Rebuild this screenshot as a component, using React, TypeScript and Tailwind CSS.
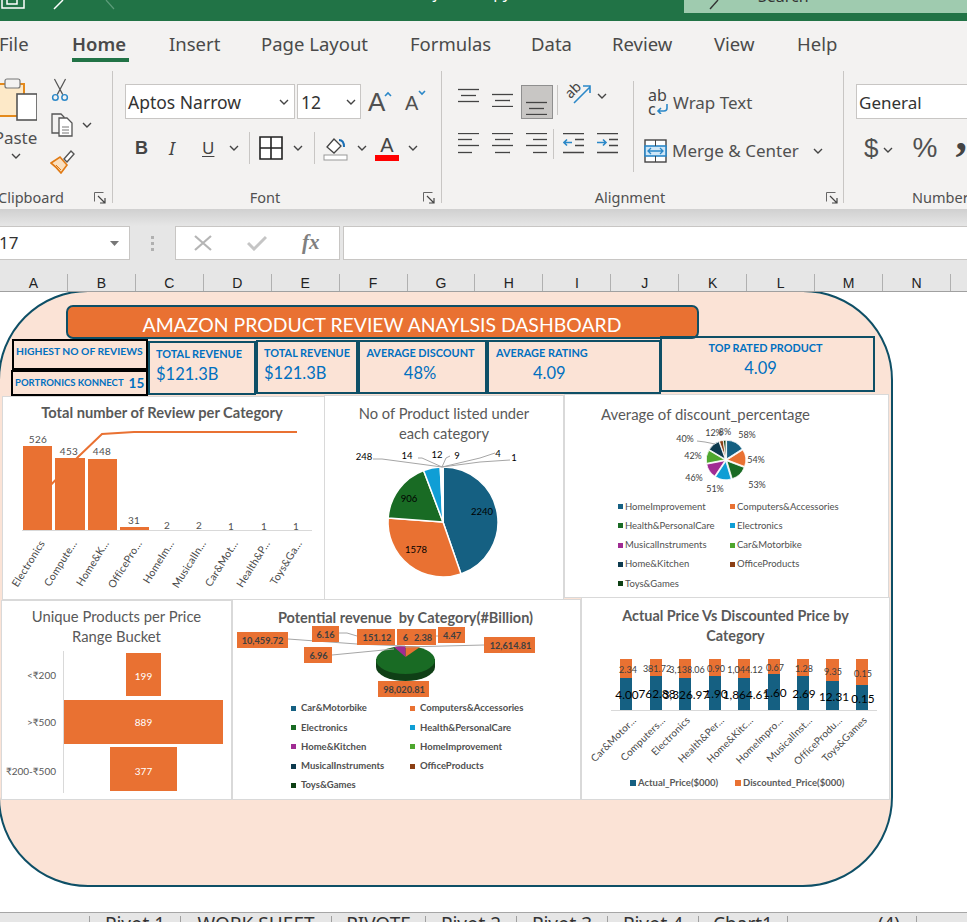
import React from "react";

const O = "#E97132", B = "#156082", G = "#196B24", C = "#0F9ED5", P = "#A02B93", L = "#4EA72E", N = "#0D3A4E", R = "#8B3F14", D = "#0E4014";
const GRAY = "#595959";

function pt(cx: number, cy: number, r: number, a: number): [number, number] {
  const t = ((a - 90) * Math.PI) / 180;
  return [cx + r * Math.cos(t), cy + r * Math.sin(t)];
}
function wedge(cx: number, cy: number, r: number, a0: number, a1: number) {
  const [x0, y0] = pt(cx, cy, r, a0);
  const [x1, y1] = pt(cx, cy, r, a1);
  return `M${cx} ${cy}L${x0} ${y0}A${r} ${r} 0 ${a1 - a0 > 180 ? 1 : 0} 1 ${x1} ${y1}Z`;
}

function T({ x, y, s, c = GRAY, w = 400, a = "middle", t, ls }: { x: number; y: number; s: number; c?: string; w?: number; a?: "middle" | "start" | "end"; t: string; ls?: number }) {
  return (
    <text x={x} y={y} fontSize={s} fill={c} fontWeight={w} textAnchor={a} dominantBaseline="central" letterSpacing={ls}>
      {t}
    </text>
  );
}

function LegendItem({ c, t, wide = false }: { c: string; t: string; wide?: boolean }) {
  return (
    <div className="flex items-center">
      <svg width="5" height="5" className={`block shrink-0 ${wide ? "mr-[5px]" : "mr-[2px]"}`}><rect width="5" height="5" fill={c} /></svg>
      <span className="text-[9.5px] text-[#505050] whitespace-nowrap">{t}</span>
    </div>
  );
}

function Chart1() {
  const bars = [
    [23, 446, 29], [55, 458, 30], [88, 459, 29], [120, 527, 29],
  ];
  const vals = [[38, 439, "526"], [69, 451, "453"], [102, 451, "448"], [134, 520, "31"], [167, 525, "2"], [199, 525, "2"], [231, 526, "1"], [264, 526, "1"], [296, 526, "1"]] as [number, number, string][];
  const cats = [[42, "Electronics"], [74, "Compute..."], [106, "Home&K..."], [139, "OfficePro..."], [171, "HomeIm..."], [203, "MusicalIn..."], [235, "Car&Mot..."], [267, "Health&P..."], [299, "Toys&Ga..."]] as [number, string][];
  return (
    <svg viewBox="3 425 321 174" className="block w-[321px] h-[174px] overflow-visible">
      <polyline points="38,498 78,457 102,434 134,432 297,432" fill="none" stroke={O} strokeWidth="2" />
      {bars.map(([x, y, w], i) => <rect key={i} x={x} y={y} width={w} height={530 - y} fill={O} />)}
      <line x1="22" x2="312" y1="530.5" y2="530.5" stroke="#d9d9d9" />
      {vals.map(([x, y, t], i) => <T key={i} x={x} y={y} s={10} c="#505050" t={t} ls={0.3} />)}
      {cats.map(([x, t], i) => (
        <text key={i} transform={`translate(${x} 541) rotate(-58)`} fontSize="10.5" fill="#4a4a4a" textAnchor="end" dominantBaseline="central" letterSpacing="0.2">{t}</text>
      ))}
    </svg>
  );
}

function Chart2() {
  const cx = 443, cy = 522, r = 55;
  const data = [[2240, B], [1578, O], [906, G], [248, C], [14, "#fff"], [12, "#fff"], [9, "#fff"], [4, "#fff"], [1, "#fff"]] as [number, string][];
  const total = data.reduce((s, d) => s + d[0], 0);
  let a = 0;
  const paths = data.map(([v, c]) => {
    const a0 = a;
    a += (v / total) * 360;
    return <path key={v} d={wedge(cx, cy, r, a0, a)} fill={c} stroke="#fff" strokeWidth="1.5" />;
  });
  const lead = "#a6a6a6";
  return (
    <svg viewBox="325 443 238 156" className="block w-[238px] h-[156px] overflow-visible">
      {paths}
      <g stroke={lead} strokeWidth="1" fill="none">
        <polyline points="373,459 382,459 442,467" />
        <polyline points="418,458 422,458 442,467" />
        <polyline points="442,467 446,458 450,456" />
        <polyline points="442,467 480,458 495,453" />
        <polyline points="442,467 480,462 510,460" />
      </g>
      <T x={364} y={456} s={9.5} c="#000" t="248" />
      <T x={407} y={455} s={9.5} c="#000" t="14" />
      <T x={437} y={454} s={9.5} c="#000" t="12" />
      <T x={457} y={455} s={9.5} c="#000" t="9" />
      <T x={498} y={453} s={9.5} c="#000" t="4" />
      <T x={514} y={457} s={9.5} c="#000" t="1" />
      <T x={482} y={511} s={9.5} c="#000" t="2240" />
      <T x={416} y={549} s={9.5} c="#000" t="1578" />
      <T x={409} y={498} s={9.5} c="#000" t="906" />
    </svg>
  );
}

function Chart3() {
  const cx = 726, cy = 460, r = 18.5;
  const data = [[58, B], [54, O], [53, G], [51, C], [46, P], [42, L], [40, N], [12, R], [8, D]] as [number, string][];
  const total = data.reduce((s, d) => s + d[0], 0);
  let a = 0;
  const paths = data.map(([v, c], i) => {
    const a0 = a;
    a += (v / total) * 360;
    const [ox, oy] = pt(0, 0, 1.3, (a0 + a) / 2);
    return <path key={i} d={wedge(cx + ox, cy + oy, r, a0, a)} fill={c} stroke="#fff" strokeWidth="0.8" />;
  });
  return (
    <svg viewBox="565 424 323 73" className="block w-[323px] h-[73px] overflow-visible">
      {paths}
      <polyline points="697,441 705,442 715,444" fill="none" stroke="#a6a6a6" />
      <T x={714} y={432} s={9} c="#404040" t="12%" />
      <T x={725} y={431} s={9} c="#404040" t="8%" />
      <T x={747} y={434} s={9} c="#404040" t="58%" />
      <T x={756} y={459} s={9} c="#404040" t="54%" />
      <T x={757} y={484} s={9} c="#404040" t="53%" />
      <T x={715} y={488} s={9} c="#404040" t="51%" />
      <T x={694} y={477} s={9} c="#404040" t="46%" />
      <T x={693} y={455} s={9} c="#404040" t="42%" />
      <T x={685} y={438} s={9} c="#404040" t="40%" />
    </svg>
  );
}

function Chart4() {
  return (
    <svg viewBox="2 646 229 153" className="block w-[229px] h-[153px] overflow-visible">
      <line x1="63.5" x2="63.5" y1="651" y2="793" stroke="#d9d9d9" />
      <rect x={126} y={653} width={35} height={43} fill={O} />
      <rect x={64} y={700} width={159} height={44} fill={O} />
      <rect x={110} y={747} width={67} height={44} fill={O} />
      <T x={56} y={675} s={10} a="end" t="<₹200" />
      <T x={56} y={722} s={10} a="end" t=">₹500" />
      <T x={56} y={771} s={10} a="end" t="₹200-₹500" />
      <T x={143.5} y={676} s={10} c="#fff" t="199" />
      <T x={143.5} y={722} s={10} c="#fff" t="889" />
      <T x={143.5} y={771} s={10} c="#fff" t="377" />
    </svg>
  );
}

function Chart5() {
  const boxes = [
    [237, 632, 51, "10,459.72", 262.5],
    [312, 626, 27, "6.16", 325.5],
    [357, 629, 38, "151.12", 377],
    [438, 627, 27, "4.47", 452],
    [484, 637, 51, "12,614.81", 510.5],
    [304, 647, 28, "6.96", 318.5],
    [378, 681, 51, "98,020.81", 404],
  ] as [number, number, number, string, number][];
  return (
    <svg viewBox="233 625 347 73" className="block w-[347px] h-[73px] overflow-visible">
      <path d="M376 659 v8 a29.5 14 0 0 0 59 0 v-8 z" fill="#0F3F16" />
      <ellipse cx="405.5" cy="660" rx="29.5" ry="14" fill={G} />
      <path d="M405.5 657 L420 647 A29.5 14 0 0 0 405.5 646 Z" fill={O} />
      <path d="M405.5 657 L394 647 A29.5 14 0 0 1 405.5 646 Z" fill={P} />
      <g stroke="#a6a6a6" fill="none">
        <polyline points="288,639 357,644 405,646" />
        <polyline points="339,633 347,633 357,636" />
        <polyline points="332,655 394,649" />
        <polyline points="484,645 405,647" />
        <polyline points="436,636 438,636" />
      </g>
      {boxes.map(([x, y, w, t, cx], i) => (
        <g key={i}>
          <rect x={x} y={y} width={w} height={16} fill={O} />
          <T x={cx} y={y + 8} s={9.2} w={700} c="#404040" t={t} />
        </g>
      ))}
      <rect x={397} y={629} width={39} height={16} fill={O} />
      <T x={405.5} y={637} s={9.2} w={700} c="#404040" t="6" />
      <T x={423} y={637} s={9.2} w={700} c="#404040" t="2.38" />
    </svg>
  );
}

function Chart6() {
  const xs = [620, 650, 679, 709, 738, 768, 797, 826, 856];
  const ws = [12, 12, 12, 12, 12, 12, 12, 13, 12];
  const tops = [678, 676, 678, 676, 678, 674, 676, 681, 685];
  const small = [[628, 669, "2.34"], [657, 668, "381.72"], [687, 669, "3,138.06"], [716, 668, "0.90"], [745, 669, "1,044.12"], [775, 667, "0.67"], [804, 668, "1.28"], [833, 671, "9.35"], [863, 673, "0.15"]] as [number, number, string][];
  const big = [[627, 694, "4.00"], [657, 693, "762.88"], [686, 694, "3,326.97"], [716, 693, "1.90"], [746, 694, "1,864.61"], [775, 692, "1.60"], [804, 693, "2.69"], [834, 696, "12.31"], [863, 698, "0.15"]] as [number, number, string][];
  const cats = [[634, "Car&Motor..."], [663, "Computers..."], [688, "Electronics"], [722, "Health&Per..."], [751, "Home&Kitc..."], [781, "HomeImpro..."], [810, "MusicalInst..."], [840, "OfficeProdu..."], [865, "Toys&Games"]] as [number, string][];
  return (
    <svg viewBox="582 646 307 130" className="block w-[307px] h-[130px] overflow-visible">
      {xs.map((x, i) => (
        <g key={x}>
          <rect x={x} y={659} width={ws[i]} height={tops[i] - 659} fill={O} />
          <rect x={x} y={tops[i]} width={ws[i]} height={710 - tops[i]} fill={B} />
        </g>
      ))}
      <line x1="611" x2="877" y1="710.5" y2="710.5" stroke="#d9d9d9" />
      {small.map(([x, y, t], i) => <T key={i} x={x} y={y} s={9} c="#404040" t={t} />)}
      {big.map(([x, y, t], i) => <T key={i} x={x} y={y} s={11.8} c="#000" t={t} />)}
      {cats.map(([x, t], i) => (
        <text key={i} transform={`translate(${x} 718) rotate(-45)`} fontSize="10" fill="#4a4a4a" textAnchor="end" dominantBaseline="central" letterSpacing="0.2">{t}</text>
      ))}
    </svg>
  );
}

function Chev({ className = "" }: { className?: string }) {
  return (
    <svg width="10" height="6" viewBox="0 0 10 6" className={`block shrink-0 ${className}`}>
      <path d="M1 1l4 4 4-4" fill="none" stroke="#444" strokeWidth="1.4" />
    </svg>
  );
}

function Launcher() {
  return (
    <svg width="12" height="12" viewBox="0 0 12 12" className="block shrink-0">
      <path d="M.5 9.5V.5h9" fill="none" stroke="#666" />
      <path d="M4 4l7 7M6 11h5V6" fill="none" stroke="#444" strokeWidth="1.2" />
    </svg>
  );
}

function Lines({ ys, c = "#444" }: { ys: number[][]; c?: string }) {
  return (
    <svg width="22" height="26" viewBox="0 0 22 26" className="block shrink-0">
      {ys.map(([y, x0, x1], i) => <line key={i} x1={x0} x2={x1} y1={y + 0.5} y2={y + 0.5} stroke={c} strokeWidth="1.3" />)}
    </svg>
  );
}

function Ribbon() {
  return (
    <div className="flex h-[147px] overflow-hidden bg-[#f3f2f1]">
      {/* Clipboard */}
      <div className="mt-[9px] flex h-[132px] w-[113px] shrink-0 flex-col border-r border-[#c8c6c4]">
        <div className="flex h-[117px] shrink-0">
          <div className="-ml-[11px] flex w-[53px] shrink-0 flex-col items-center pt-[6px]">
            <svg width="42" height="46" viewBox="0 0 42 46" className="block">
              <rect x="0" y="7" width="29" height="32" fill="#fde9c8" stroke="#e48a1c" strokeWidth="2" />
              <rect x="10" y="2" width="15" height="9" rx="2" fill="#f3f2f1" stroke="#777" strokeWidth="1.2" />
              <rect x="22" y="17" width="20" height="26" fill="#fff" stroke="#555" strokeWidth="1.6" />
            </svg>
            <span className="mt-[2px] text-[17px] leading-[26px] text-[#505050]">Paste</span>
            <Chev className="mt-[2px]" />
          </div>
          <div className="flex flex-col pl-[8px] pt-[7px]">
            <svg width="20" height="24" viewBox="0 0 20 26" className="block">
              <path d="M4 1l9 17M16 1L7 18" stroke="#555" strokeWidth="1.3" fill="none" />
              <circle cx="5" cy="21" r="3" fill="none" stroke="#2b88c8" strokeWidth="1.6" />
              <circle cx="15" cy="21" r="3" fill="none" stroke="#2b88c8" strokeWidth="1.6" />
            </svg>
            <div className="mt-[10px] flex items-center">
              <svg width="26" height="26" viewBox="0 0 26 26" className="block shrink-0">
                <path d="M2 2h9l3 3v16H2z" fill="#f3f2f1" stroke="#555" strokeWidth="1.3" />
                <path d="M9 6h8l5 5v13H9z" fill="#fff" stroke="#555" strokeWidth="1.3" />
                <path d="M12 15h7M12 18h7M12 21h7" stroke="#777" />
              </svg>
              <Chev className="ml-[6px]" />
            </div>
            <svg width="26" height="26" viewBox="0 0 26 26" className="mt-[10px] block">
              <path d="M1 15l9-6 7 8-6 8C8 21 5 18 1 15z" fill="#fbe0bf" stroke="#e07a14" strokeWidth="1.6" />
              <path d="M14 11l7-8 3 3-7 8z" fill="#fff" stroke="#555" strokeWidth="1.4" />
              <path d="M6 17l5 5" stroke="#e07a14" />
            </svg>
          </div>
        </div>
        <div className="flex h-[20px] shrink-0 items-center text-[14.5px] text-[#505050]">
          <span className="-ml-[2px] w-[96px]">Clipboard</span>
          <Launcher />
        </div>
      </div>

      {/* Font */}
      <div className="mt-[9px] flex h-[132px] w-[329px] shrink-0 flex-col border-r border-[#c8c6c4]">
        <div className="h-[117px] shrink-0 pl-[12px] pt-[13px]">
          <div className="flex h-[35px] items-center">
            <div className="flex h-[35px] w-[170px] items-center justify-between border border-[#c8c6c4] bg-white pl-[2px] pr-[5px] pt-[1px] text-[17.5px] text-[#333]">
              <span>Aptos Narrow</span><Chev />
            </div>
            <div className="ml-[2px] flex h-[35px] w-[64px] items-center justify-between border border-[#c8c6c4] bg-white pl-[3px] pr-[4px] pt-[1px] text-[17.5px] text-[#333]">
              <span>12</span><Chev />
            </div>
            <div className="ml-[7px] flex w-[30px] items-start font-['Liberation_Sans'] text-[26px] leading-[28px] text-[#505050]">
              <span>A</span>
              <svg width="8" height="6" viewBox="0 0 8 6" className="-ml-[1px] mt-[3px] block shrink-0"><path d="M1 5l3-3 3 3" fill="none" stroke="#2b88c8" strokeWidth="1.6" /></svg>
            </div>
            <div className="ml-[7px] flex w-[24px] items-start font-['Liberation_Sans'] text-[20px] leading-[28px] text-[#505050]">
              <span className="pt-[2px]">A</span>
              <svg width="8" height="6" viewBox="0 0 8 6" className="mt-[3px] block shrink-0"><path d="M1 1l3 3 3-3" fill="none" stroke="#2b88c8" strokeWidth="1.6" /></svg>
            </div>
          </div>
          <div className="mt-[12px] flex h-[34px] items-center text-[#444]">
            <span className="ml-[10px] w-[34px] font-['Liberation_Sans'] text-[18px] font-bold">B</span>
            <span className="w-[33px] text-[18px] italic">I</span>
            <span className="w-[27px] text-[17px] underline underline-offset-2">U</span>
            <Chev />
            <div className="ml-[10px] h-[32px] w-px bg-[#c8c6c4]" />
            <svg width="24" height="24" viewBox="0 0 24 24" className="ml-[9px] block shrink-0">
              <path d="M1 1h22v22H1zM12 1v22M1 12h22" fill="#fff" stroke="#222" strokeWidth="1.6" />
            </svg>
            <Chev className="ml-[10px]" />
            <div className="ml-[11px] h-[32px] w-px bg-[#c8c6c4]" />
            <svg width="25" height="26" viewBox="0 0 25 26" className="ml-[8px] block shrink-0">
              <path d="M4 12l7-8 7 7-7 7z" fill="#fff" stroke="#444" strokeWidth="1.3" />
              <path d="M16 5c3 0 5 2 5 7" fill="none" stroke="#1a6fb5" strokeWidth="2" />
              <rect x="1" y="20" width="23" height="5" fill="#fff" stroke="#999" />
            </svg>
            <Chev className="ml-[9px]" />
            <div className="ml-[8px] flex w-[24px] shrink-0 flex-col items-center">
              <span className="font-['Liberation_Sans'] text-[20px] leading-[20px] text-[#444]">A</span>
              <div className="h-[6px] w-[24px] bg-[#ff0000]" />
            </div>
            <Chev className="ml-[9px]" />
          </div>
        </div>
        <div className="flex h-[20px] shrink-0 items-center text-[14.5px] text-[#505050]">
          <span className="w-[310px] pr-[6px] text-center">Font</span>
          <Launcher />
        </div>
      </div>

      {/* Alignment */}
      <div className="mt-[9px] flex h-[132px] w-[402px] shrink-0 flex-col border-r border-[#c8c6c4]">
        <div className="flex h-[117px] shrink-0">
          <div className="mt-[10px] flex h-[91px] w-[192px] shrink-0 flex-col border-r border-[#c8c6c4] pl-[16px]">
            <div className="flex h-[44px] items-start">
              <Lines ys={[[8, 0, 21], [14, 3, 18], [20, 0, 21]]} />
              <div className="ml-[12px]"><Lines ys={[[13, 0, 21], [19, 3, 18], [25, 0, 21]]} /></div>
              <div className="ml-[7px] mt-[4px] flex h-[34px] w-[32px] shrink-0 items-end justify-center border border-[#8f8f8f] bg-[#c8c6c4] pb-[3px]">
                <Lines ys={[[13, 0, 21], [19, 3, 18], [25, 0, 21]]} />
              </div>
              <div className="ml-[4px] mt-[4px] h-[30px] w-px bg-[#c8c6c4]" />
              <svg width="26" height="26" viewBox="0 0 26 26" className="ml-[8px] block shrink-0">
                <text x="1" y="14" fontSize="14" fill="#444" transform="rotate(-45 8 12)">ab</text>
                <path d="M8 22L24 6M17 5h7v7" fill="none" stroke="#2b88c8" strokeWidth="1.6" />
              </svg>
              <Chev className="ml-[5px] mt-[12px]" />
            </div>
            <div className="mt-[8px] flex h-[34px] items-start">
              <Lines ys={[[0, 0, 21], [6, 0, 14], [12, 0, 21], [19, 0, 14]]} />
              <div className="ml-[12px]"><Lines ys={[[0, 0, 21], [6, 3, 18], [12, 0, 21], [19, 3, 18]]} /></div>
              <div className="ml-[12px]"><Lines ys={[[0, 0, 21], [6, 7, 21], [12, 0, 21], [19, 7, 21]]} /></div>
              <div className="ml-[5px] -mt-[4px] h-[30px] w-px bg-[#c8c6c4]" />
              <div className="ml-[9px]">
                <svg width="22" height="26" viewBox="0 0 22 26" className="block">
                  <path d="M0 .5h21M12 6.5h9M12 12.5h9M0 19.5h21" stroke="#444" strokeWidth="1.3" />
                  <path d="M9 9.5H1M4 6.5l-3 3 3 3" fill="none" stroke="#2b88c8" strokeWidth="1.6" />
                </svg>
              </div>
              <div className="ml-[12px]">
                <svg width="22" height="26" viewBox="0 0 22 26" className="block">
                  <path d="M0 .5h21M12 6.5h9M12 12.5h9M0 19.5h21" stroke="#444" strokeWidth="1.3" />
                  <path d="M0 9.5h9M6 6.5l3 3-3 3" fill="none" stroke="#2b88c8" strokeWidth="1.6" />
                </svg>
              </div>
            </div>
          </div>
          <div className="flex flex-col pl-[10px] pt-[14px]">
            <div className="flex h-[35px] items-center">
              <div className="flex h-[30px] w-[27px] shrink-0 flex-col pl-[4px] text-[16px] leading-[14px] text-[#444]">
                <span>ab</span>
                <span className="flex items-center">c
                  <svg width="12" height="10" viewBox="0 0 12 10" className="block"><path d="M11 0v4q0 3-3 3H2M5 4L2 7l3 3" fill="none" stroke="#2b88c8" strokeWidth="1.6" /></svg>
                </span>
              </div>
              <span className="ml-[2px] text-[17px] text-[#505050]">Wrap Text</span>
            </div>
            <div className="mt-[13px] flex h-[35px] items-center">
              <svg width="23" height="24" viewBox="0 0 23 24" className="block shrink-0">
                <rect x="1" y="1" width="21" height="22" fill="#fff" stroke="#444" strokeWidth="1.4" />
                <rect x="1" y="7" width="21" height="10" fill="#cfe6f6" stroke="#2b88c8" strokeWidth="1.6" />
                <path d="M4 12h15M7 9l-3 3 3 3M16 9l3 3-3 3" fill="none" stroke="#2b88c8" strokeWidth="1.3" />
                <path d="M11.5 1v6M11.5 17v6" stroke="#444" />
              </svg>
              <span className="ml-[5px] text-[17px] text-[#505050]">Merge &amp; Center</span>
              <Chev className="ml-[14px]" />
            </div>
          </div>
        </div>
        <div className="flex h-[20px] shrink-0 items-center text-[14.5px] text-[#505050]">
          <span className="w-[384px] pr-[8px] text-center">Alignment</span>
          <Launcher />
        </div>
      </div>

      {/* Number */}
      <div className="mt-[9px] flex h-[132px] min-w-0 flex-1 flex-col">
        <div className="h-[117px] shrink-0 pl-[12px] pt-[13px]">
          <div className="flex h-[35px] w-[140px] items-center border border-[#c8c6c4] bg-white pl-[2px] pt-[2px] text-[17px] text-[#333]">General</div>
          <div className="mt-[12px] flex h-[34px] items-center text-[#505050]">
            <span className="ml-[8px] w-[18px] font-['Liberation_Sans'] text-[26px]">$</span>
            <Chev className="ml-[4px] mt-[3px]" />
            <span className="ml-[20px] font-['Liberation_Sans'] text-[28px] leading-none">%</span>
            <span className="ml-[18px] -mt-[26px] font-['Liberation_Serif'] text-[46px] font-bold leading-none text-[#444]">,</span>
          </div>
        </div>
        <div className="flex h-[20px] shrink-0 items-center text-[14.5px] text-[#505050]">
          <span className="ml-[68px] whitespace-nowrap">Number</span>
        </div>
      </div>
    </div>
  );
}

const TAB_CLASS = "shrink-0 text-[18.5px] leading-[46px]";
const COL_CLASS = "flex h-[17px] w-[67.93px] shrink-0 items-center justify-center border-r border-[#b0b0b0] font-['Liberation_Sans'] text-[14px] leading-none text-[#222]";
const KPI_LABEL = "text-[10.9px] font-bold leading-[18px] whitespace-nowrap";
const KPI_VALUE = "text-[16.5px] leading-[22px]";

export default function App() {
  const cols = ["A", "B", "C", "D", "E", "F", "G", "H", "I", "J", "K", "L", "M", "N", ""];
  return (
    <div className="h-[922px] w-[967px] overflow-hidden bg-white font-['Noto_Sans',sans-serif]">
      {/* Title bar */}
      <div className="flex h-[21px] items-start overflow-hidden bg-[#217346]">
        <svg width="26" height="10" viewBox="0 0 26 10" className="ml-[1px] block shrink-0">
          <path d="M1 0v8h22V0M6 0v4h10V0" fill="none" stroke="#fff" strokeWidth="1.5" />
        </svg>
        <svg width="14" height="10" viewBox="0 0 14 10" className="ml-[25px] block shrink-0">
          <path d="M2 9l9-9" stroke="#fff" strokeWidth="1.5" />
        </svg>
        <svg width="12" height="10" viewBox="0 0 12 10" className="ml-[38px] block shrink-0">
          <path d="M10 9L2 0" stroke="#5d9c7a" strokeWidth="1.2" />
        </svg>
        <span className="-mt-[19px] w-[395px] shrink-0 text-right text-[16px] leading-[22px] text-white">Amazon Project - Copy</span>
        <div className="ml-[173px] flex h-[13px] flex-1 items-start overflow-hidden bg-[#9fcbaf]">
          <svg width="12" height="10" viewBox="0 0 12 10" className="ml-[25px] block shrink-0"><path d="M1 9L9 0" stroke="#333" strokeWidth="1.4" /></svg>
          <span className="-mt-[14px] ml-[37px] text-[16px] leading-[20px] text-[#333]">Search</span>
        </div>
      </div>

      {/* Tabs */}
      <div className="relative flex h-[41px] bg-[#f3f2f1] text-[#4a4a4a]">
        <span className={`-ml-[1px] w-[73px] ${TAB_CLASS}`}>File</span>
        <span className={`relative w-[97px] font-semibold ${TAB_CLASS}`}>
          Home
          <span className="absolute left-0 top-[37px] h-[4px] w-[57px] bg-[#217346]" />
        </span>
        <span className={`w-[92px] ${TAB_CLASS}`}>Insert</span>
        <span className={`w-[149px] ${TAB_CLASS}`}>Page Layout</span>
        <span className={`w-[121px] ${TAB_CLASS}`}>Formulas</span>
        <span className={`w-[81px] ${TAB_CLASS}`}>Data</span>
        <span className={`w-[102px] ${TAB_CLASS}`}>Review</span>
        <span className={`w-[83px] ${TAB_CLASS}`}>View</span>
        <span className={`w-[60px] ${TAB_CLASS}`}>Help</span>
      </div>

      <Ribbon />

      {/* Formula bar */}
      <div className="h-[83px] overflow-hidden bg-[#e6e6e6]">
        <div className="h-[17px] bg-gradient-to-b from-[#d0d0d0] to-[#e6e6e6]" />
        <div className="flex h-[34px] items-stretch">
          <div className="-ml-[2px] flex w-[132px] shrink-0 items-center justify-between border border-[#c8c6c4] bg-white pr-[10px] text-[17px] text-[#333]">
            <span>17</span>
            <svg width="9" height="5" viewBox="0 0 9 5" className="block"><path d="M0 0h9L4.5 5z" fill="#777" /></svg>
          </div>
          <div className="flex w-[45px] shrink-0 flex-col items-center justify-center gap-[3px]">
            <span className="h-[3px] w-[3px] bg-[#b0b0b0]" />
            <span className="h-[3px] w-[3px] bg-[#b0b0b0]" />
            <span className="h-[3px] w-[3px] bg-[#b0b0b0]" />
          </div>
          <div className="flex w-[165px] shrink-0 items-center border border-[#c8c6c4] bg-white">
            <svg width="18" height="16" viewBox="0 0 18 16" className="ml-[18px] block shrink-0"><path d="M1 1l16 14M17 1L1 15" stroke="#b5b5b5" strokeWidth="2.2" /></svg>
            <svg width="20" height="16" viewBox="0 0 20 16" className="ml-[35px] block shrink-0"><path d="M1 8l6 6L19 2" fill="none" stroke="#c5c5c5" strokeWidth="3" /></svg>
            <span className="ml-[35px] font-['Liberation_Serif'] text-[21px] font-bold italic text-[#808080]">fx</span>
          </div>
          <div className="ml-[3px] -mr-[2px] flex-1 border border-[#c8c6c4] bg-white" />
        </div>
        <div className="flex h-[32px] items-end border-b border-[#a0a0a0]">
          {cols.map((c, i) => (
            <div key={i} className={COL_CLASS}>{c}</div>
          ))}
        </div>
      </div>

      {/* Sheet canvas */}
      <div className="relative h-[620px] overflow-hidden bg-white font-['Lato',sans-serif]">
        <div className="absolute -left-[2px] -top-[2px] h-[597px] w-[895px] rounded-[90px] border-[2.5px] border-[#0e4f66] bg-[#fbe3d6]" />

        {/* Title */}
        <div className="absolute left-[66px] top-[13px] flex h-[34px] w-[633px] items-center justify-center rounded-[7px] border-[2.5px] border-[#0e4f66] bg-[#e97132] pr-[1px] pt-[6px] text-[19.4px] leading-none text-white">
          AMAZON PRODUCT REVIEW ANAYLSIS DASHBOARD
        </div>

        {/* KPI boxes */}
        <div className="absolute left-[12px] top-[47px] h-[31px] w-[136px] whitespace-nowrap border-2 border-black pl-[2px] text-[10.3px] font-bold leading-[20px] text-[#0070c0]">
          HIGHEST NO OF REVIEWS
        </div>
        <div className="absolute left-[11px] top-[78px] flex h-[26px] w-[137px] items-center border-2 border-black pl-[2px] text-[9.5px] font-bold text-[#0070c0]">
          <span className="whitespace-nowrap">PORTRONICS KONNECT</span>
          <span className="ml-[5px] text-[13.5px]">15</span>
        </div>
        <div className="absolute left-[148px] top-[49px] h-[54px] w-[108px] border-[2.5px] border-[#0e4f66] pl-[6px] pt-[2px] text-[#0070c0]">
          <div className={KPI_LABEL}>TOTAL REVENUE</div>
          <div className={KPI_VALUE}>$121.3B</div>
        </div>
        <div className="absolute left-[256px] top-[48px] h-[54px] w-[102px] border-[2.5px] border-[#0e4f66] pl-[6px] pt-[2px] text-[#0070c0]">
          <div className={KPI_LABEL}>TOTAL REVENUE</div>
          <div className={KPI_VALUE}>$121.3B</div>
        </div>
        <div className="absolute left-[358px] top-[48px] h-[54px] w-[129px] border-[2.5px] border-[#0e4f66] pt-[2px] text-center text-[#0070c0]">
          <div className={`${KPI_LABEL} pr-[4px]`}>AVERAGE DISCOUNT</div>
          <div className={`${KPI_VALUE} pr-[5px]`}>48%</div>
        </div>
        <div className="absolute left-[487px] top-[48px] h-[54px] w-[174px] border-[2.5px] border-[#0e4f66] pl-[7px] pt-[2px] text-[#0070c0]">
          <div className={KPI_LABEL}>AVERAGE RATING</div>
          <div className={`${KPI_VALUE} pl-[37px]`}>4.09</div>
        </div>
        <div className="absolute left-[660px] top-[44px] h-[56px] w-[215px] border-[2.5px] border-[#0e4f66] pt-[1px] text-center text-[#0070c0]">
          <div className={`${KPI_LABEL} pr-[4px]`}>TOP RATED PRODUCT</div>
          <div className={`${KPI_VALUE} pr-[14px]`}>4.09</div>
        </div>

        {/* Charts */}
        <div className="absolute left-[2px] top-[104px] h-[204px] w-[323px] border border-[#d9d9d9] bg-white">
          <div className="h-[28px] pr-[3px] text-center text-[14.7px] font-bold leading-[30px] text-[#595959]">Total number of Review per Category</div>
          <Chart1 />
        </div>
        <div className="absolute left-[324px] top-[103px] h-[205px] w-[240px] border border-[#d9d9d9] bg-white">
          <div className="px-[20px] pt-[7px] text-center text-[14.7px] leading-[20px] text-[#595959]">No of Product listed under each category</div>
          <Chart2 />
        </div>
        <div className="absolute left-[564px] top-[102px] h-[204px] w-[325px] border border-[#d9d9d9] bg-white">
          <div className="h-[29px] pr-[42px] pt-[9px] text-center text-[14.9px] leading-[20px] text-[#595959]">Average of discount_percentage</div>
          <Chart3 />
          <div className="grid auto-rows-[19.3px] grid-cols-[112px_112px] items-center pl-[53px]">
            <LegendItem c={B} t="HomeImprovement" />
            <LegendItem c={O} t="Computers&Accessories" />
            <LegendItem c={G} t="Health&PersonalCare" />
            <LegendItem c={C} t="Electronics" />
            <LegendItem c={P} t="MusicalInstruments" />
            <LegendItem c={L} t="Car&Motorbike" />
            <LegendItem c={N} t="Home&Kitchen" />
            <LegendItem c={R} t="OfficeProducts" />
            <LegendItem c={D} t="Toys&Games" />
          </div>
        </div>
        <div className="absolute left-[1px] top-[308px] h-[200px] w-[231px] border border-[#d9d9d9] bg-white">
          <div className="px-[20px] pt-[5px] text-center text-[14.8px] leading-[20px] text-[#595959]">Unique Products per Price Range Bucket</div>
          <Chart4 />
        </div>
        <div className="absolute left-[232px] top-[307px] h-[201px] w-[349px] border border-[#d9d9d9] bg-white">
          <div className="h-[25px] pr-[2px] pt-[8px] text-center text-[14.5px] font-bold leading-[20px] text-[#595959]">Potential revenue&nbsp; by Category(#Billion)</div>
          <Chart5 />
          <div className="grid auto-rows-[19.2px] grid-cols-[119px_119px] items-center pl-[58px] pt-[1px] font-bold">
            <LegendItem wide c={B} t="Car&Motorbike" />
            <LegendItem wide c={O} t="Computers&Accessories" />
            <LegendItem wide c={G} t="Electronics" />
            <LegendItem wide c={C} t="Health&PersonalCare" />
            <LegendItem wide c={P} t="Home&Kitchen" />
            <LegendItem wide c={L} t="HomeImprovement" />
            <LegendItem wide c={N} t="MusicalInstruments" />
            <LegendItem wide c={R} t="OfficeProducts" />
            <LegendItem wide c={D} t="Toys&Games" />
          </div>
        </div>
        <div className="absolute left-[581px] top-[305px] h-[203px] w-[309px] border border-[#d9d9d9] bg-white">
          <div className="px-[20px] pt-[8px] text-center text-[14.4px] font-bold leading-[20px] text-[#595959]">Actual Price Vs Discounted Price by Category</div>
          <Chart6 />
          <div className="flex h-[14px] items-center pl-[48px]">
            <svg width="6" height="6" className="mr-[2px] block shrink-0"><rect width="6" height="6" fill={B} /></svg>
            <span className="w-[97px] text-[9.5px] font-bold text-[#595959]">Actual_Price($000)</span>
            <svg width="6" height="6" className="mr-[2px] block shrink-0"><rect width="6" height="6" fill={O} /></svg>
            <span className="whitespace-nowrap text-[9.5px] font-bold text-[#595959]">Discounted_Price($000)</span>
          </div>
        </div>
      </div>

      {/* Sheet tabs */}
      <div className="flex h-[10px] overflow-hidden border-t border-[#a6a6a6] bg-[#e6e6e6] text-[19px] leading-[16px] text-[#333]">
        <div className="w-[89px] shrink-0" />
        <div className="mt-[3px] w-[91px] shrink-0 border-l border-[#a0a0a0] text-center">Pivot 1</div>
        <div className="mt-[3px] w-[151px] shrink-0 border-l border-[#a0a0a0] text-center">WORK SHEET</div>
        <div className="mt-[3px] w-[94px] shrink-0 border-l border-[#a0a0a0] text-center">PIVOTE</div>
        <div className="mt-[3px] w-[91px] shrink-0 border-l border-[#a0a0a0] text-center">Pivot 2</div>
        <div className="mt-[3px] w-[91px] shrink-0 border-l border-[#a0a0a0] text-center">Pivot 3</div>
        <div className="mt-[3px] w-[91px] shrink-0 border-l border-[#a0a0a0] text-center">Pivot 4</div>
        <div className="mt-[3px] w-[89px] shrink-0 border-l border-[#a0a0a0] text-center">Chart1</div>
        <div className="mt-[3px] w-[130px] shrink-0 border-l border-r border-[#a0a0a0] pr-[16px] text-right">(4)</div>
      </div>
    </div>
  );
}
